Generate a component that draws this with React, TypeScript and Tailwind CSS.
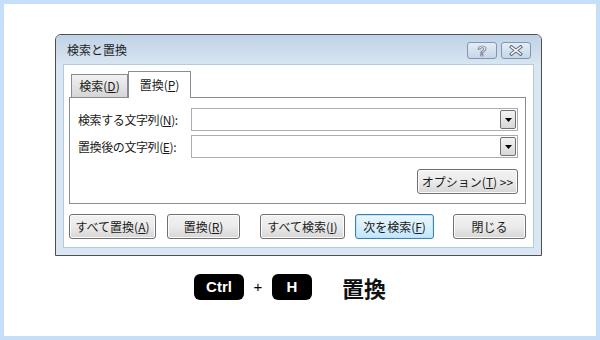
import React from 'react';

const font = { fontFamily: '"Noto Sans CJK JP", "Noto Sans", sans-serif' };
const latin = { fontFamily: '"Liberation Sans", Arial, sans-serif' };

const Btn: React.FC<{ w: string; primary?: boolean; children: React.ReactNode }> = ({ w, primary, children }) => (
    <div
        className={`${w} h-[25px] flex items-center justify-center rounded-[3px] border text-[12px] text-[#1a1a1a] ${
            primary
                ? 'border-[#3c7fb1] bg-gradient-to-b from-[#eaf6fd] via-[#d9f0fc] to-[#bee6fd] shadow-[inset_0_0_0_1px_#c2e2f6]'
                : 'border-[#707070] bg-gradient-to-b from-[#f2f2f2] via-[#ebebeb] to-[#d6d6d6] shadow-[inset_0_0_0_1px_#fcfcfc]'
        }`}
    >
        {children}
    </div>
);

const Combo: React.FC = () => (
    <div className="w-[327px] h-[23px] border border-[#abadb3] bg-white flex justify-end items-center pr-[1px]">
        <div className="w-[16px] h-[19px] border border-[#707070] rounded-[2px] bg-gradient-to-b from-[#f2f2f2] to-[#d8d8d8] flex items-center justify-center">
            <svg width="7" height="4" viewBox="0 0 7 4"><path d="M0 0h7L3.5 4z" fill="#000" /></svg>
        </div>
    </div>
);

export default function App() {
    return (
        <div className="w-[600px] h-[340px] border-4 border-[#c5dff8] bg-white pl-[51px] pt-[30px]" style={font}>
            {/* dialog */}
            <div className="w-[487px] h-[222px] border border-[#4f4f4f] rounded-t-[6px] bg-[#d9e6f3] flex flex-col overflow-hidden">
                <div className="h-[29px] flex items-center justify-between pl-[11px] pr-[10px] bg-gradient-to-b from-[#bfd2e6] to-[#d8e5f2]">
                    <span className="text-[12px] text-[#1e1e1e]">検索と置換</span>
                    <div className="flex gap-[4px] mt-[2px]">
                        <div className="w-[30px] h-[17px] rounded-[3px] border border-[#8396ad] bg-gradient-to-b from-[#e4edf6] to-[#c6d6e7] flex items-center justify-center">
                            <span className="text-[15px] font-bold text-white leading-none" style={{ ...latin, WebkitTextStroke: '0.7px #5a6677' }}>?</span>
                        </div>
                        <div className="w-[30px] h-[17px] rounded-[3px] border border-[#8396ad] bg-gradient-to-b from-[#e4edf6] to-[#c6d6e7] flex items-center justify-center">
                            <svg width="14" height="11" viewBox="0 0 14 11">
                                <path d="M2.5 2l9 7M11.5 2l-9 7" stroke="#5a6677" strokeWidth="3.4" strokeLinecap="square" />
                                <path d="M2.5 2l9 7M11.5 2l-9 7" stroke="#fff" strokeWidth="1.5" strokeLinecap="square" />
                            </svg>
                        </div>
                    </div>
                </div>

                {/* client area */}
                <div className="flex-1 mx-[7px] mb-[7px] bg-white border border-[#b9c9da] pt-[6px] px-[5px]">
                    {/* tabs */}
                    <div className="flex items-end h-[26px] pl-[2px]">
                        <div className="w-[57px] h-[23px] border border-[#898c95] border-b-0 bg-gradient-to-b from-[#f2f2f2] to-[#d5d5d5] flex items-center justify-center text-[12px] text-[#1a1a1a]">
                            検索(<u>D</u>)
                        </div>
                        <div className="w-[63px] h-[27px] border border-[#898c95] border-b-0 bg-white flex items-center justify-center text-[12px] text-[#1a1a1a] relative -mb-[1px] z-10">
                            置換(<u>P</u>)
                        </div>
                    </div>
                    {/* panel */}
                    <div className="w-[457px] h-[107px] border border-[#898c95] pt-[10px] pl-[8px] pr-[7px] flex flex-col">
                        <div className="flex items-center justify-between h-[23px]">
                            <span className="text-[12px] text-[#1a1a1a] tracking-[-0.4px]">検索する文字列(<u>N</u>):</span>
                            <Combo />
                        </div>
                        <div className="flex items-center justify-between h-[23px] mt-[4px]">
                            <span className="text-[12px] text-[#1a1a1a] tracking-[-0.4px]">置換後の文字列(<u>E</u>):</span>
                            <Combo />
                        </div>
                        <div className="flex justify-end mt-[11px]">
                            <Btn w="w-[101px]">オプション(<u>T</u>) &gt;&gt;</Btn>
                        </div>
                    </div>
                    {/* buttons */}
                    <div className="flex mt-[10px]">
                        <Btn w="w-[87px]">すべて置換(<u>A</u>)</Btn>
                        <div className="ml-[11px]"><Btn w="w-[73px]">置換(<u>R</u>)</Btn></div>
                        <div className="ml-[20px]"><Btn w="w-[85px]">すべて検索(<u>I</u>)</Btn></div>
                        <div className="ml-[10px]"><Btn w="w-[79px]" primary>次を検索(<u>F</u>)</Btn></div>
                        <div className="ml-[19px]"><Btn w="w-[73px]">閉じる</Btn></div>
                    </div>
                </div>
            </div>

            {/* shortcut */}
            <div className="flex items-center mt-[18px] ml-[139px] h-[26px]">
                <div className="w-[50px] h-[26px] rounded-[6px] bg-black text-white font-bold text-[15px] flex items-center justify-center" style={latin}>
                    Ctrl
                </div>
                <span className="w-[28px] text-center text-[15px] text-black" style={latin}>+</span>
                <div className="w-[40px] h-[26px] rounded-[6px] bg-black text-white font-bold text-[15px] flex items-center justify-center" style={latin}>
                    H
                </div>
                <span className="ml-[30px] text-[22px] font-bold text-[#111] leading-none">置換</span>
            </div>
        </div>
    );
}
